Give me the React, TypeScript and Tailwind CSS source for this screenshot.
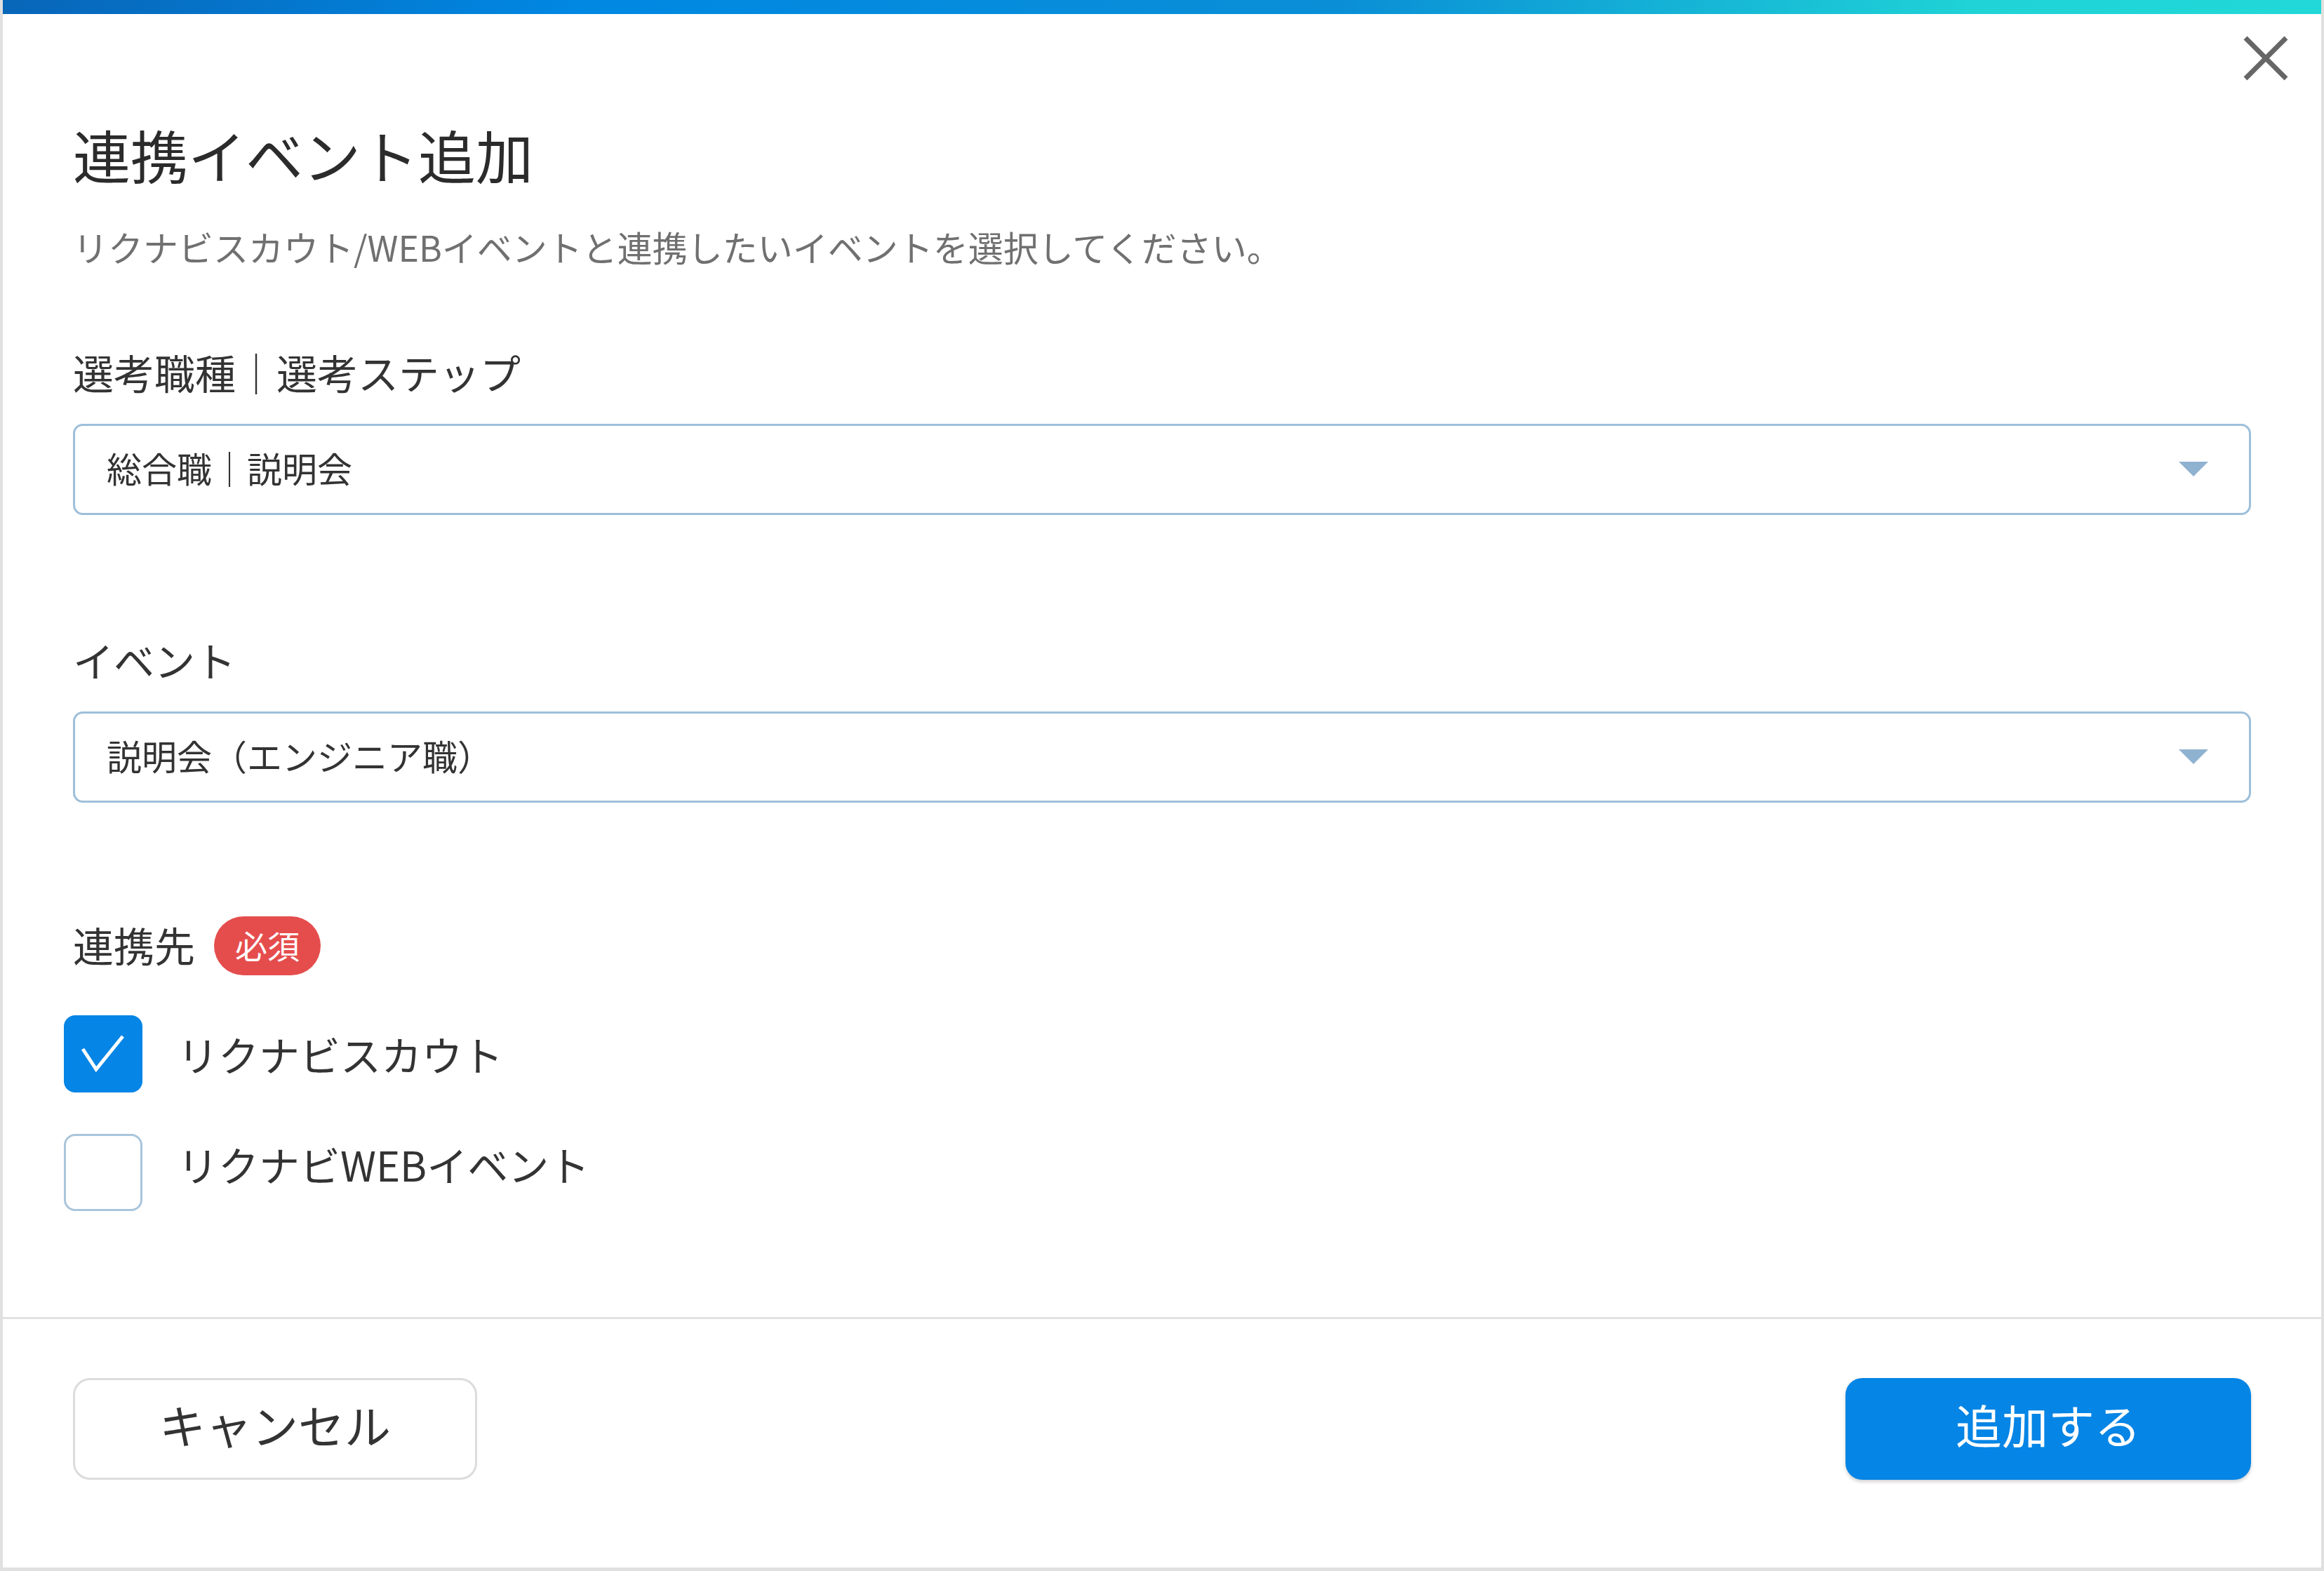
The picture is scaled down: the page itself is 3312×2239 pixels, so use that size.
import React, { useState } from "react";

const CloseIcon = () => (
  <svg width="66" height="66" viewBox="0 0 66 66" fill="none">
    <path d="M4 4 L62 62 M62 4 L4 62" stroke="#666666" strokeWidth="7" />
  </svg>
);

const Caret = () => (
  <svg width="42" height="22" viewBox="0 0 42 22">
    <path d="M0 0 H42 L21 21 Z" fill="#8fb2d0" />
  </svg>
);

const SelectBox = ({ value }: { value: string }) => (
  <div className="flex h-[130px] w-full items-center justify-between rounded-[14px] border-[3px] border-[#9ebfd9] bg-white pl-[45px] pr-[58px]">
    <span className="pb-[6px] text-[50px] leading-none text-[#333333]">{value}</span>
    <Caret />
  </div>
);

const CheckRow = ({
  label,
  checked,
  onToggle,
  className,
  labelClass,
}: {
  label: string;
  checked: boolean;
  onToggle: () => void;
  className?: string;
  labelClass?: string;
}) => (
  <div className={`flex items-center ${className ?? ""}`} onClick={onToggle}>
    {checked ? (
      <div className="-ml-[13px] h-[110px] w-[112px] shrink-0 rounded-[16px] bg-[#0585e5]">
        <svg width="112" height="110" viewBox="0 0 112 110" fill="none">
          <path d="M27 48 L46 77 L84 30" stroke="#ffffff" strokeWidth="5" />
        </svg>
      </div>
    ) : (
      <div className="-ml-[13px] h-[110px] w-[112px] shrink-0 rounded-[16px] border-[3px] border-[#a9c5dc] bg-white" />
    )}
    <span className={`ml-[50px] text-[58px] leading-none text-[#333333] ${labelClass ?? ""}`}>
      {label}
    </span>
  </div>
);

export default function App() {
  const [scout, setScout] = useState(true);
  const [web, setWeb] = useState(false);

  return (
    <div className="relative flex h-[2239px] w-full flex-col border-x-[4px] border-b-[5px] border-[#e0e0e0] bg-white font-['Noto_Sans_CJK_JP','Noto_Sans',sans-serif]">
      <div className="h-[20px] w-full bg-[linear-gradient(to_right,#0866b8_0%,#0088e3_25%,#0a8fd6_58%,#1fd3d6_85%,#22d8d8_100%)]" />

      <button className="absolute right-[46px] top-[50px]">
        <CloseIcon />
      </button>

      <div className="flex flex-col px-[100px]">
        <h1 className="mt-[140px] text-[82px] font-normal leading-[120px] text-[#2b2b2b]">
          連携イベント追加
        </h1>
        <p className="mt-[35px] text-[50px] leading-[72px] text-[#707070]">
          リクナビスカウト/WEBイベントと連携したいイベントを選択してください。
        </p>

        <label className="mt-[103px] text-[58px] leading-[80px] text-[#333333]">
          選考職種｜選考ステップ
        </label>
        <div className="mt-[34px]">
          <SelectBox value="総合職｜説明会" />
        </div>

        <label className="mt-[166px] text-[58px] leading-[80px] text-[#333333]">イベント</label>
        <div className="mt-[34px]">
          <SelectBox value="説明会（エンジニア職）" />
        </div>

        <div className="mt-[162px] flex h-[84px] items-center">
          <span className="pb-[4px] text-[58px] leading-none text-[#333333]">連携先</span>
          <span className="ml-[27px] flex h-[84px] w-[152px] items-center justify-center rounded-full bg-[#e54d4d] pb-[4px] text-[46px] leading-none text-white">
            必須
          </span>
        </div>

        <CheckRow
          className="mt-[57px]"
          label="リクナビスカウト"
          checked={scout}
          onToggle={() => setScout(!scout)}
        />
        <CheckRow
          className="mt-[59px]"
          labelClass="mb-[25px]"
          label="リクナビWEBイベント"
          checked={web}
          onToggle={() => setWeb(!web)}
        />
      </div>

      <div className="mt-[151px] h-[3px] w-full bg-[#e2e2e2]" />

      <div className="mt-[84px] flex items-center justify-between px-[100px]">
        <button className="flex h-[145px] w-[576px] items-center justify-center rounded-[24px] border-[3px] border-[#dcdcdc] bg-white pb-[16px] text-[66px] leading-none text-[#333333]">
          キャンセル
        </button>
        <button className="flex h-[145px] w-[578px] items-center justify-center rounded-[24px] bg-[#0585e5] pb-[16px] text-[66px] leading-none text-white shadow-[0_3px_5px_rgba(0,0,0,0.18)]">
          追加する
        </button>
      </div>
    </div>
  );
}
